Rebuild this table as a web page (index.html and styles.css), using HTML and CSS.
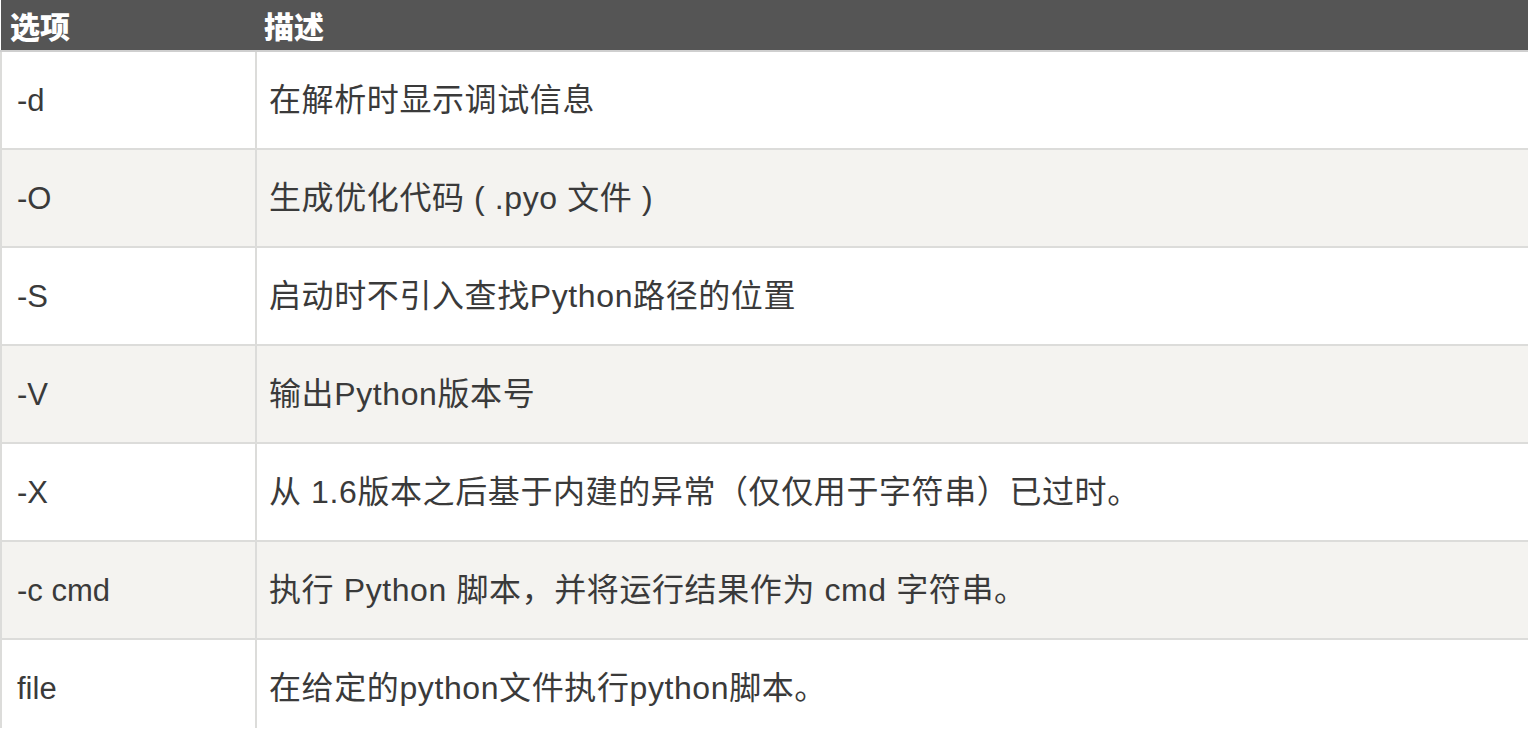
FILE: index.html
```html
<!DOCTYPE html>
<html lang="zh-CN">
<head>
<meta charset="utf-8">
<link rel="stylesheet" href="styles.css">
</head>
<body>
<div class="frame">
<table class="opts">
  <thead>
    <tr><th class="c1">选项</th><th>描述</th></tr>
  </thead>
  <tbody>
    <tr><td class="c1">-d</td><td>在解析时显示调试信息</td></tr>
    <tr><td class="c1">-O</td><td>生成优化代码 ( .pyo 文件 )</td></tr>
    <tr><td class="c1">-S</td><td>启动时不引入查找Python路径的位置</td></tr>
    <tr><td class="c1">-V</td><td>输出Python版本号</td></tr>
    <tr><td class="c1">-X</td><td>从 1.6版本之后基于内建的异常（仅仅用于字符串）已过时。</td></tr>
    <tr><td class="c1">-c cmd</td><td>执行 Python 脚本，并将运行结果作为 cmd 字符串。</td></tr>
    <tr><td class="c1">file</td><td>在给定的python文件执行python脚本。</td></tr>
  </tbody>
</table>
</div>
</body>
</html>
```
FILE: styles.css
```css
html, body {
  margin: 0;
  padding: 0;
  background: #ffffff;
}
.frame {
  width: 1528px;
  height: 728px;
  overflow: hidden;
}
.opts {
  width: 1530px;
  border-collapse: collapse;
  font-family: "Liberation Sans", "Noto Sans CJK SC", sans-serif;
  font-size: 31px;
  color: #3a3a3a;
  table-layout: fixed;
}
.opts th {
  background: #555555;
  color: #ffffff;
  font-family: "Noto Sans CJK SC", sans-serif;
  font-weight: 900;
  font-size: 30px;
  text-align: left;
  height: 50px;
  padding: 0 0 0 9px;
  border-bottom: 2px solid #cfcfcf;
  line-height: 1;
}
.opts th + th {
  padding-left: 8px;
}
.opts th.c1 {
  width: 246px;
}
.opts td {
  height: 96px;
  padding: 0 0 0 12px;
  border: 2px solid #dcdcda;
  border-top: 0;
  vertical-align: middle;
  line-height: 1;
}
.opts td + td {
  font-size: 32px;
  letter-spacing: 0.6px;
}
.opts td.c1 {
  padding-left: 15px;
}
.opts tbody tr:nth-child(odd) td {
  background: #ffffff;
}
.opts tbody tr:nth-child(even) td {
  background: #f4f3f0;
}
```
